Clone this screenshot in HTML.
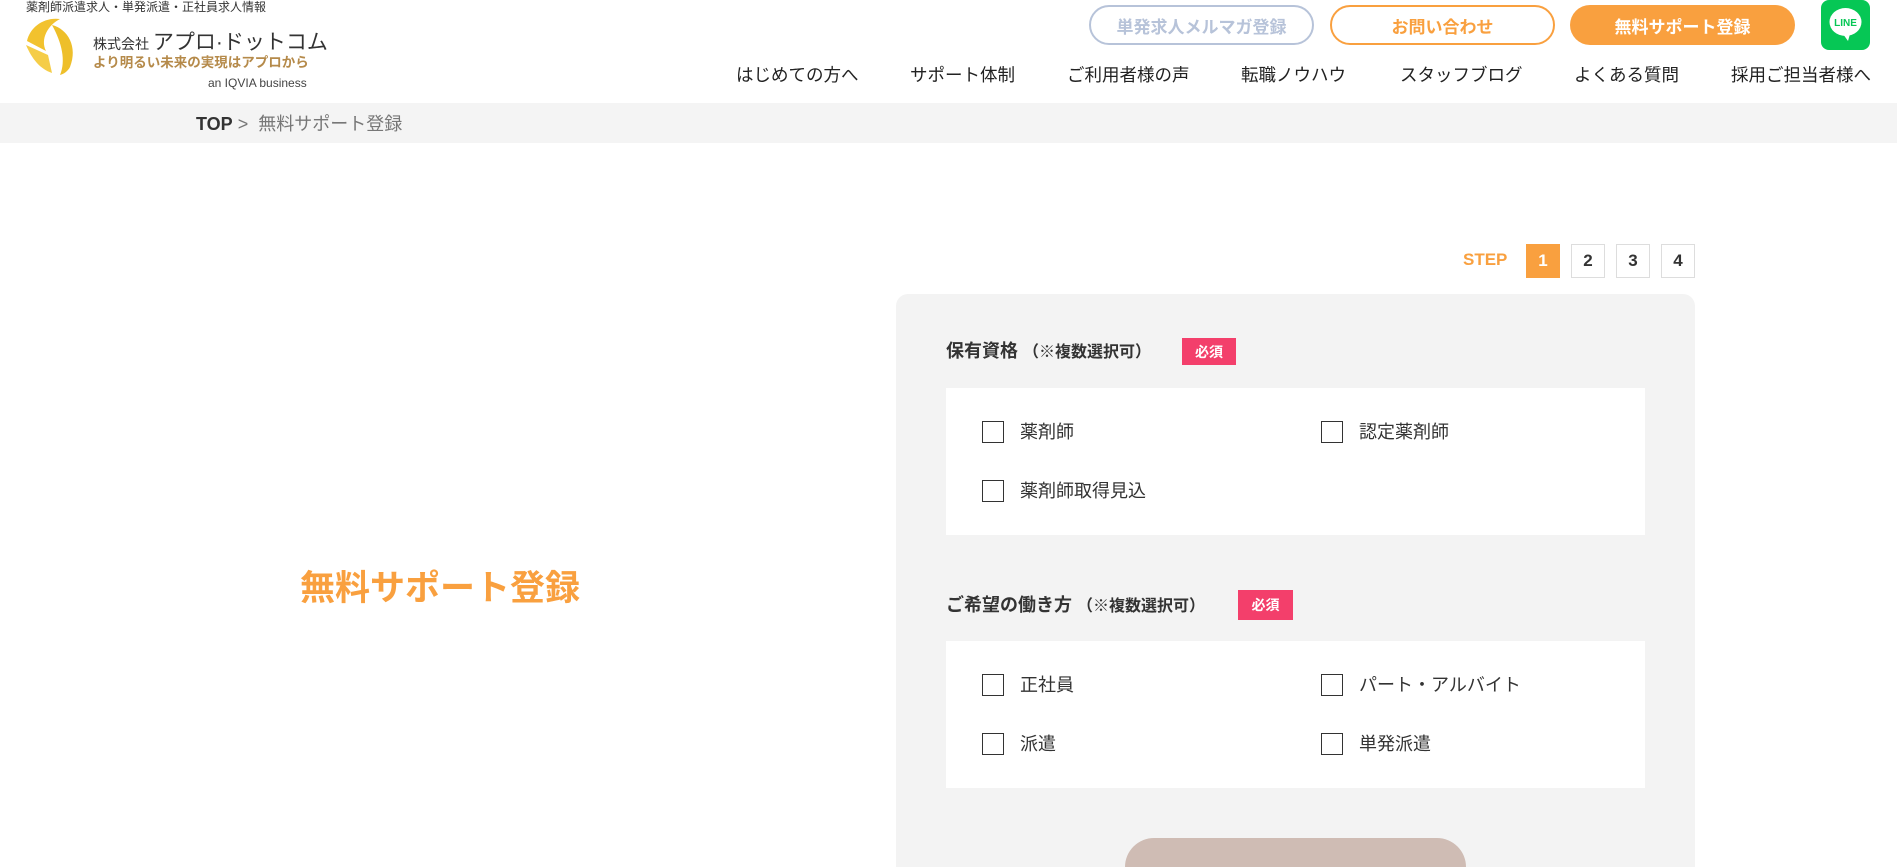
<!DOCTYPE html>
<html><head><meta charset="utf-8"><style>
*{margin:0;padding:0;box-sizing:border-box}
html,body{width:1897px;height:867px;overflow:hidden}
body{background:#fff;font-family:"Liberation Sans","Noto Sans CJK JP",sans-serif;color:#333;position:relative}
.a{position:absolute;white-space:nowrap}
.btn{position:absolute;height:40px;border-radius:20px;font-size:17px;font-weight:bold;display:flex;align-items:center;justify-content:center}
.nav{position:absolute;top:62px;font-size:17.5px;color:#222}
.cb{position:absolute;width:22px;height:22px;border:1.5px solid #333;background:#fff}
.lab{position:absolute;font-size:18px;color:#333}
.box{position:absolute;left:946px;width:699px;background:#fff}
.badge{position:absolute;background:#f33f6b;color:#fff;font-size:14px;font-weight:bold;display:flex;align-items:center;justify-content:center}
.st{position:absolute;top:244px;width:34px;height:34px;border:1px solid #ddd;font-size:17px;font-weight:bold;display:flex;align-items:center;justify-content:center;background:#fff}
</style></head><body>
<div class="a" style="left:26px;top:-2px;font-size:12px;color:#333">薬剤師派遣求人・単発派遣・正社員求人情報</div>
<svg class="a" style="left:24px;top:17px" width="56" height="60" viewBox="0 0 56 60">
<path d="M36 2 C20 0 6 10 3 24 L22 34 C16 22 24 8 36 2Z" fill="#f2c22e"/>
<path d="M2 28 C8 42 16 52 28 56 L24 38 Z" fill="#f5cd48"/>
<path d="M28 8 C44 12 54 30 46 50 C44 54 40 57 36 58 C42 44 38 26 28 8Z" fill="#eebf2a"/>
</svg>
<div class="a" style="left:93px;top:26px;font-size:14px;color:#333">株式会社 <span style="font-size:21px">アプロ·ドットコム</span></div>
<div class="a" style="left:93px;top:51px;font-size:13.5px;font-weight:bold;color:#b58a4a">より明るい未来の実現はアプロから</div>
<div class="a" style="left:208px;top:76px;font-size:12px;color:#444">an IQVIA business</div>

<div class="btn" style="left:1089px;top:5px;width:225px;border:2px solid #b7c3d9;color:#b7c3d9">単発求人メルマガ登録</div>
<div class="btn" style="left:1330px;top:5px;width:225px;border:2px solid #f9a03f;color:#f9a03f">お問い合わせ</div>
<div class="btn" style="left:1570px;top:5px;width:225px;background:#f9a03f;color:#fff">無料サポート登録</div>
<div class="a" style="left:1821px;top:0;width:49px;height:50px;background:#06c755;border-radius:8px">
<svg width="49" height="50" viewBox="0 0 49 50"><ellipse cx="24.5" cy="22" rx="16" ry="14" fill="#fff"/><path d="M22 34 L27 41 L29 34Z" fill="#fff"/><text x="24.5" y="26" text-anchor="middle" font-size="10" font-weight="bold" fill="#06c755" font-family="Liberation Sans">LINE</text></svg></div>

<div class="nav" style="left:736px">はじめての方へ</div>
<div class="nav" style="left:910px">サポート体制</div>
<div class="nav" style="left:1067px">ご利用者様の声</div>
<div class="nav" style="left:1241px">転職ノウハウ</div>
<div class="nav" style="left:1400px">スタッフブログ</div>
<div class="nav" style="left:1574px">よくある質問</div>
<div class="nav" style="left:1731px">採用ご担当者様へ</div>

<div class="a" style="left:0;top:103px;width:1897px;height:40px;background:#f4f4f4"></div>
<div class="a" style="left:196px;top:110px;font-size:18px;color:#333"><b>TOP</b> <span style="color:#777">&gt;&nbsp; 無料サポート登録</span></div>

<div class="a" style="left:300px;top:560px;font-size:35px;font-weight:bold;color:#f9a03f">無料サポート登録</div>

<div class="a" style="left:1463px;top:250px;font-size:17px;font-weight:bold;color:#f9a03f">STEP</div>
<div class="st" style="left:1526px;background:#f9a03f;color:#fff;border-color:#f9a03f">1</div>
<div class="st" style="left:1571px">2</div>
<div class="st" style="left:1616px">3</div>
<div class="st" style="left:1661px">4</div>

<div class="a" style="left:896px;top:294px;width:799px;height:573px;background:#f3f3f3;border-radius:12px 12px 0 0"></div>

<div class="a" style="left:946px;top:337px;font-size:18px;font-weight:bold">保有資格 <span style="font-size:16px">（※複数選択可）</span></div>
<div class="badge" style="left:1182px;top:338px;width:54px;height:27px">必須</div>
<div class="box" style="top:388px;height:147px"></div>
<div class="cb" style="left:982px;top:421px"></div><div class="lab" style="left:1020px;top:418px">薬剤師</div>
<div class="cb" style="left:1321px;top:421px"></div><div class="lab" style="left:1359px;top:418px">認定薬剤師</div>
<div class="cb" style="left:982px;top:480px"></div><div class="lab" style="left:1020px;top:477px">薬剤師取得見込</div>

<div class="a" style="left:946px;top:591px;font-size:18px;font-weight:bold">ご希望の働き方 <span style="font-size:16px">（※複数選択可）</span></div>
<div class="badge" style="left:1238px;top:590px;width:55px;height:30px">必須</div>
<div class="box" style="top:641px;height:147px"></div>
<div class="cb" style="left:982px;top:674px"></div><div class="lab" style="left:1020px;top:671px">正社員</div>
<div class="cb" style="left:1321px;top:674px"></div><div class="lab" style="left:1359px;top:671px">パート・アルバイト</div>
<div class="cb" style="left:982px;top:733px"></div><div class="lab" style="left:1020px;top:730px">派遣</div>
<div class="cb" style="left:1321px;top:733px"></div><div class="lab" style="left:1359px;top:730px">単発派遣</div>

<div class="a" style="left:1125px;top:838px;width:341px;height:29px;border-radius:40px 40px 0 0;background:#cfbcb4"></div>
</body></html>
